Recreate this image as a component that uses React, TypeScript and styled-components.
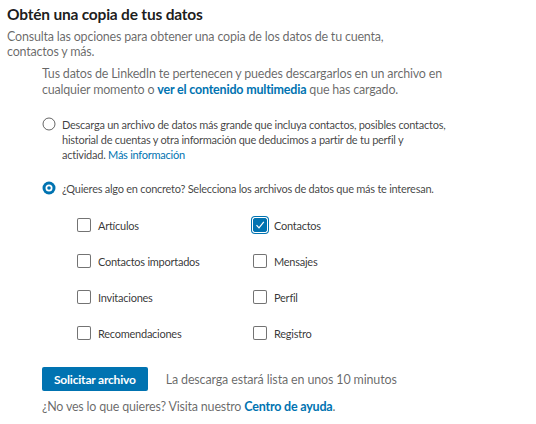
import React from 'react';
import styled, { createGlobalStyle } from 'styled-components';

const blue = '#0073b1';

const GlobalStyle = createGlobalStyle`
    body {
        margin: 0;
        background: #fff;
        font-family: Lato, "Open Sans", Arial, sans-serif;
    }
`

const Page = styled.main`
    width: 536px;
    height: 424px;
    box-sizing: border-box;
    padding: 4px 7px 0;
`

const Title = styled.h1`
    margin: 0;
    font-size: 15.5px;
    font-weight: 700;
    letter-spacing: -0.2px;
    line-height: 20px;
    color: rgba(0, 0, 0, 0.9);
`

const Subtitle = styled.p`
    margin: 5px 0 0;
    max-width: 380px;
    font-size: 12.5px;
    letter-spacing: -0.2px;
    line-height: 15px;
    color: rgba(0, 0, 0, 0.6);
`

const Body = styled.div`
    padding-left: 35px;
`

const Intro = styled.p`
    margin: 7px 0 0;
    max-width: 412px;
    font-size: 12.5px;
    letter-spacing: -0.2px;
    line-height: 16px;
    color: rgba(0, 0, 0, 0.6);
`

const Link = styled.a<{ plain?: boolean }>`
    color: ${blue};
    font-weight: ${p => (p.plain ? 400 : 700)};
    text-decoration: none;
`

const Option = styled.label<{ top: number }>`
    display: flex;
    align-items: flex-start;
    gap: 6px;
    margin-top: ${p => p.top}px;
    font-size: 11px;
    letter-spacing: -0.25px;
    line-height: 15px;
    color: rgba(0, 0, 0, 0.75);
`

const OptionText = styled.span`
    max-width: 392px;
`

const RadioIcon = styled.svg`
    flex: none;
    width: 14px;
    height: 14px;
`

const Grid = styled.div`
    display: grid;
    grid-template-columns: 176px 176px;
    grid-auto-rows: 36px;
    margin: 21px 0 0 35px;
`

const CheckRow = styled.label`
    display: flex;
    align-items: center;
    gap: 7px;
    height: 16px;
    font-size: 11px;
    letter-spacing: -0.25px;
    color: rgba(0, 0, 0, 0.8);
`

const Box = styled.span<{ checked?: boolean }>`
    flex: none;
    box-sizing: border-box;
    width: 14px;
    height: 14px;
    border-radius: 2px;
    display: flex;
    align-items: center;
    justify-content: center;
    border: 1px solid ${p => (p.checked ? blue : 'rgba(0, 0, 0, 0.55)')};
    background: ${p => (p.checked ? blue : '#fff')};
    box-shadow: ${p => (p.checked ? `0 0 0 1px #fff, 0 0 0 2px ${blue}` : 'none')};
`

const Actions = styled.div`
    display: flex;
    align-items: center;
    gap: 18px;
    margin-top: 6px;
`

const Button = styled.button`
    height: 24px;
    padding: 0 12px;
    border: none;
    border-radius: 2px;
    background: ${blue};
    color: #fff;
    font-family: inherit;
    font-size: 12px;
    font-weight: 700;
    letter-spacing: -0.2px;
    cursor: pointer;
`

const Note = styled.span`
    font-size: 12.5px;
    letter-spacing: -0.15px;
    color: rgba(0, 0, 0, 0.6);
`

const Help = styled.p`
    margin: 8px 0 0;
    font-size: 12.5px;
    letter-spacing: -0.2px;
    line-height: 16px;
    color: rgba(0, 0, 0, 0.6);
`

const Radio = ({ checked }: { checked?: boolean }) => (
    <RadioIcon viewBox="0 0 14 14">
        {checked ? (
            <>
                <circle cx="7" cy="7" r="6.5" fill={blue} />
                <circle cx="7" cy="7" r="3.5" fill="#fff" />
                <circle cx="7" cy="7" r="1.8" fill={blue} />
            </>
        ) : (
            <circle cx="7" cy="7" r="6" fill="#fff" stroke="rgba(0,0,0,0.6)" strokeWidth="1" />
        )}
    </RadioIcon>
)

const files = [
    { name: 'Artículos', checked: false },
    { name: 'Contactos', checked: true },
    { name: 'Contactos importados', checked: false },
    { name: 'Mensajes', checked: false },
    { name: 'Invitaciones', checked: false },
    { name: 'Perfil', checked: false },
    { name: 'Recomendaciones', checked: false },
    { name: 'Registro', checked: false },
]

export default function App() {
    return (
        <Page>
            <GlobalStyle />
            <Title>Obtén una copia de tus datos</Title>
            <Subtitle>
                Consulta las opciones para obtener una copia de los datos de tu cuenta, contactos y más.
            </Subtitle>
            <Body>
                <Intro>
                    Tus datos de LinkedIn te pertenecen y puedes descargarlos en un archivo en
                    cualquier momento o <Link>ver el contenido multimedia</Link> que has cargado.
                </Intro>
                <Option top={19}>
                    <Radio />
                    <OptionText>
                        Descarga un archivo de datos más grande que incluya contactos, posibles contactos,
                        historial de cuentas y otra información que deducimos a partir de tu perfil y<br />
                        actividad. <Link plain>Más información</Link>
                    </OptionText>
                </Option>
                <Option top={19}>
                    <Radio checked />
                    <OptionText>
                        ¿Quieres algo en concreto? Selecciona los archivos de datos que más te interesan.
                    </OptionText>
                </Option>
                <Grid>
                    {files.map(f => (
                        <CheckRow key={f.name}>
                            <Box checked={f.checked}>
                                {f.checked && (
                                    <svg width="10" height="10" viewBox="0 0 10 10">
                                        <path d="M1.5 5.2 L4 7.8 L8.8 1.8" fill="none" stroke="#fff" strokeWidth="1.2" />
                                    </svg>
                                )}
                            </Box>
                            {f.name}
                        </CheckRow>
                    ))}
                </Grid>
                <Actions>
                    <Button>Solicitar archivo</Button>
                    <Note>La descarga estará lista en unos 10 minutos</Note>
                </Actions>
                <Help>
                    ¿No ves lo que quieres? Visita nuestro <Link>Centro de ayuda</Link>.
                </Help>
            </Body>
        </Page>
    );
}
